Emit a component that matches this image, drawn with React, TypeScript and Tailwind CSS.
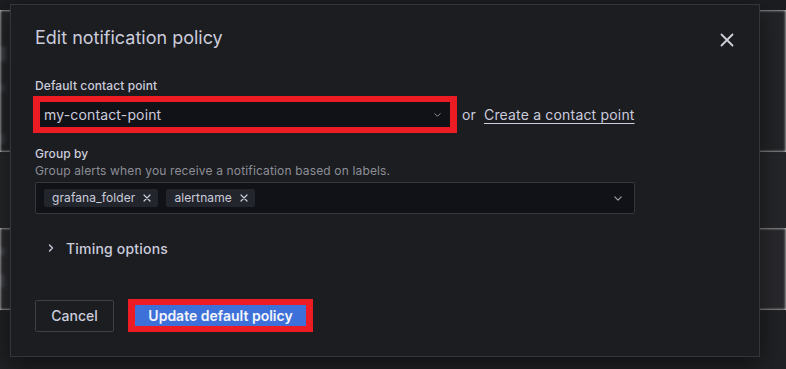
const ChevronDown = ({ className }: { className?: string }) => (
  <svg className={className} viewBox="0 0 10 6" fill="none">
    <path d="M1 1l4 4 4-4" stroke="currentColor" strokeWidth="1.5" strokeLinecap="round" strokeLinejoin="round" />
  </svg>
);

const CloseIcon = () => (
  <svg width="14" height="14" viewBox="0 0 14 14" fill="none">
    <path d="M1.5 1.5l11 11M12.5 1.5l-11 11" stroke="#d0d0dc" strokeWidth="1.8" strokeLinecap="round" />
  </svg>
);

const TagX = () => (
  <svg width="8" height="8" viewBox="0 0 8 8" fill="none">
    <path d="M1 1l6 6M7 1L1 7" stroke="#ccccdc" strokeWidth="1.2" strokeLinecap="round" />
  </svg>
);

const Tag = ({ label }: { label: string }) => (
  <span className="flex items-center gap-[8px] h-[18px] pl-[8px] pr-[7px] bg-[#22252b] rounded-[2px] text-[12px] tracking-[0.1px] text-[#ccccdc]">
    {label}
    <TagX />
  </span>
);

// blurred page behind the modal backdrop
const Backdrop = () => (
  <div className="flex flex-col w-[786px] h-[369px]">
    <div className="h-[10px] bg-[#1c1d20]" />
    <div className="h-[142px] bg-[#232427] flex flex-col pt-[36px] gap-[22px] blur-[1.5px]">
      <div className="w-[6px] h-[16px] bg-[#3a3b3f] rounded-[3px]" />
      <div className="w-[5px] h-[8px] bg-[#34353a] rounded-[2px]" />
      <div className="w-[5px] h-[10px] bg-[#34353a] rounded-[2px] mt-[20px]" />
    </div>
    <div className="h-[76px] bg-[#252629] border-t border-[#2a2b2f]" />
    <div className="h-[82px] bg-[#29292d] border-t border-[#2c2d31] flex flex-col pt-[18px] gap-[18px] blur-[1.5px]">
      <div className="w-[5px] h-[9px] bg-[#3d3e43] rounded-[2px]" />
      <div className="w-[5px] h-[14px] bg-[#3d3e43] rounded-[2px]" />
    </div>
    <div className="flex-1 bg-[#202124]" />
  </div>
);

export default function App() {
  return (
    <div className="relative w-[786px] h-[369px] overflow-hidden font-['Inter',sans-serif]">
      <Backdrop />
      <div className="absolute left-[10px] top-[4px] w-[750px] h-[353px] bg-[#1b1d21] border border-[#33353a] shadow-[0_8px_24px_rgba(0,0,0,0.5)] px-6 pt-[20px] pb-6 flex flex-col">
        <div className="flex items-center justify-between h-[24px] mt-[1px]">
          <h2 className="text-[18px] leading-[24px] text-[#ccccdc] font-normal">Edit notification policy</h2>
          <span className="mr-[1px] mt-[3px]">
            <CloseIcon />
          </span>
        </div>

        <label className="mt-[28px] text-[12px] leading-[16px] font-medium tracking-[0.1px] text-[#ccccdc]">Default contact point</label>
        <div className="flex items-center mt-[2px] -ml-[2px]">
          <div className="w-[424px] h-[37px] border-y-[6px] border-x-[7px] border-[#ed1c24] bg-[#111217] flex items-center justify-between pl-[4px] pr-[9px]">
            <span className="text-[14px] tracking-[0.15px] text-[#ccccdc]">my-contact-point</span>
            <ChevronDown className="w-[7px] h-[4px] text-[#8e8e97]" />
          </div>
          <span className="ml-[5px] text-[14px] tracking-[0.15px] text-[#ccccdc]">or</span>
          <a className="ml-[8px] text-[14px] tracking-[0.18px] text-[#ccccdc] underline underline-offset-[3px] decoration-[1px]">Create a contact point</a>
        </div>

        <label className="mt-[13px] text-[12px] leading-[16px] font-medium tracking-[0.1px] text-[#ccccdc]">Group by</label>
        <span className="mt-[1px] text-[12px] leading-[16px] tracking-[0.15px] text-[#8e8e97]">
          Group alerts when you receive a notification based on labels.
        </span>
        <div className="mt-[3px] w-[600px] h-[32px] bg-[#111217] border border-[#35373c] rounded-[2px] flex items-center justify-between pl-[8px] pr-[12px]">
          <div className="flex items-center gap-[8px]">
            <Tag label="grafana_folder" />
            <Tag label="alertname" />
          </div>
          <ChevronDown className="w-[8px] h-[5px] text-[#9fa0a6]" />
        </div>

        <div className="mt-[24px] flex items-center h-[20px] pl-[13px]">
          <svg width="6" height="8" viewBox="0 0 6 8" fill="none">
            <path d="M1.5 1l3 3-3 3" stroke="#ccccdc" strokeWidth="1.4" strokeLinecap="round" strokeLinejoin="round" />
          </svg>
          <span className="ml-[12px] text-[14px] font-medium tracking-[0.2px] text-[#ccccdc]">Timing options</span>
        </div>

        <div className="mt-auto flex items-center">
          <button type="button" className="h-[32px] w-[79px] border border-[#3e4045] rounded-[2px] text-[14px] font-medium text-[#ccccdc]">
            Cancel
          </button>
          <div className="ml-[14px] h-[33px] border-y-[6px] border-x-[7px] border-[#ed1c24] flex">
            <button type="button" className="h-[21px] w-[171px] bg-[#3d71d9] text-[14px] font-semibold text-[#f3f5fb] leading-[21px]">
              Update default policy
            </button>
          </div>
        </div>
      </div>
    </div>
  );
}
